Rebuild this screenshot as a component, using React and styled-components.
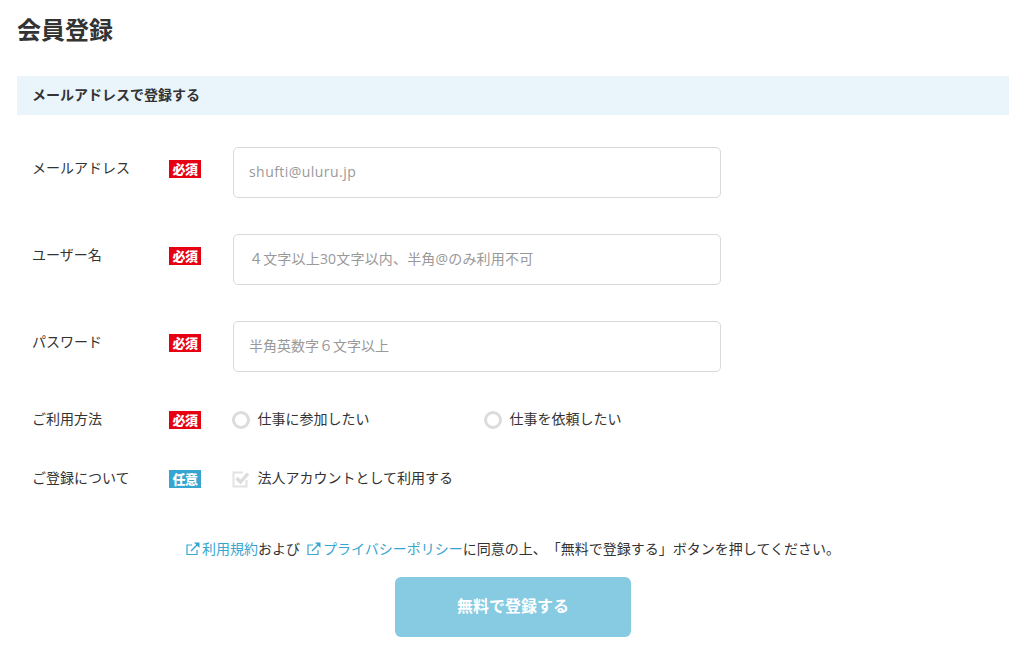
import React from "react";
import styled, { createGlobalStyle } from "styled-components";

const Global = createGlobalStyle`
  html, body {
    margin: 0;
    padding: 0;
    background: #fff;
    color: #333;
    font-family: "Noto Sans CJK JP", "Noto Sans", sans-serif;
    text-spacing-trim: space-all;
    font-feature-settings: "chws" 0, "palt" 0;
  }
  * { box-sizing: border-box; }
`;

const Page = styled.div`
  width: 992px;
  margin-left: 17px;
  padding-top: 12px;
`;

const Title = styled.h1`
  margin: 0;
  height: 64px;
  font-size: 24px;
  line-height: 34px;
  font-weight: 700;
  color: #333;
`;

const SectionBar = styled.div`
  height: 39px;
  padding-left: 15px;
  background: #e9f5fa;
  font-size: 14px;
  line-height: 37px;
  font-weight: 700;
`;

const Form = styled.div`
  padding-top: 32px;
`;

const Row = styled.div`
  display: flex;
  align-items: ${(p) => (p.$center ? "center" : "flex-start")};
  height: ${(p) => p.$height}px;
  margin-top: ${(p) => p.$top || 0}px;
  padding-left: 15px;
`;

const Label = styled.div`
  width: 137px;
  font-size: 14px;
  line-height: 20px;
  padding-top: ${(p) => (p.$center ? 0 : 10)}px;
  padding-bottom: ${(p) => (p.$center ? 4 : 0)}px;
`;

const Badge = styled.span`
  display: block;
  width: 32px;
  height: 18px;
  margin-right: 32px;
  margin-top: ${(p) => (p.$center ? 0 : 13)}px;
  background: ${(p) => (p.$optional ? "#36a6d0" : "#e60012")};
  color: #fff;
  font-size: 13px;
  line-height: 18px;
  font-weight: 900;
  text-align: center;
  white-space: nowrap;
  letter-spacing: -0.5px;
`;

const Input = styled.input`
  width: 488px;
  height: 51px;
  padding: 0 15px 2px;
  border: 1px solid #d9d9d9;
  border-radius: 5px;
  background: #fff;
  font-family: "Open Sans", "Noto Sans CJK JP", sans-serif;
  font-size: 14px;
  letter-spacing: ${(p) => p.$spacing || 0}px;
  outline: none;
  &::placeholder {
    color: #999;
    opacity: 1;
  }
`;

const Option = styled.label`
  display: flex;
  align-items: center;
  gap: 7.5px;
  width: ${(p) => p.$width || 252}px;
  margin-left: -1px;
  margin-right: 1px;
  font-size: 14px;
  line-height: 20px;
`;

const OptionText = styled.span`
  margin-top: -4px;
`;

const RadioMark = styled.span`
  width: 18px;
  height: 18px;
  border: 3px solid #dcdcdc;
  border-radius: 50%;
  background: #fff;
`;

const CheckIcon = () => (
  <svg width="18" height="18" viewBox="0 0 18 18" fill="none">
    <path d="M14.5 10V16.5H1.5V2.5H11" stroke="#e2e2e2" strokeWidth="2" />
    <path d="M4.5 8L8.5 12L16 3.5" stroke="#dcdcdc" strokeWidth="3.4" />
  </svg>
);

const Notice = styled.p`
  margin: 0;
  padding-top: 49px;
  height: 88px;
  font-size: 14px;
  line-height: 20px;
  text-align: center;
`;

const TermLink = styled.a`
  color: #36a6d0;
  text-decoration: none;
  margin-left: ${(p) => p.$gap || 0}px;
  svg {
    vertical-align: -2px;
    margin-right: 2px;
  }
`;

const ExternalIcon = () => (
  <svg width="14" height="14" viewBox="0 0 14 14" fill="none">
    <path d="M11 8V12.5H1V3H6" stroke="#36a6d0" strokeWidth="1.2" />
    <path d="M5 9L12 2" stroke="#36a6d0" strokeWidth="1.4" />
    <path d="M8 0.5H13.5V6Z" fill="#36a6d0" />
  </svg>
);

const Submit = styled.button`
  display: block;
  width: 236px;
  height: 60px;
  margin: 0 auto;
  padding: 0 0 4px;
  border: 0;
  border-radius: 6px;
  background: #86cbe2;
  color: #fff;
  font-family: inherit;
  font-size: 16px;
  font-weight: 700;
`;

export default function App() {
  return (
    <Page>
      <Global />
      <Title>会員登録</Title>
      <SectionBar>メールアドレスで登録する</SectionBar>
      <Form>
        <Row $height={87}>
          <Label>メールアドレス</Label>
          <Badge>必須</Badge>
          <Input $spacing={0.45} placeholder="shufti@uluru.jp" />
        </Row>
        <Row $height={87}>
          <Label>ユーザー名</Label>
          <Badge>必須</Badge>
          <Input $spacing={0.18} placeholder="４文字以上30文字以内、半角@のみ利用不可" />
        </Row>
        <Row $height={87}>
          <Label>パスワード</Label>
          <Badge>必須</Badge>
          <Input placeholder="半角英数字６文字以上" />
        </Row>
        <Row $center $height={20} $top={2}>
          <Label $center>ご利用方法</Label>
          <Badge $center>必須</Badge>
          <Option><RadioMark /><OptionText>仕事に参加したい</OptionText></Option>
          <Option><RadioMark /><OptionText>仕事を依頼したい</OptionText></Option>
        </Row>
        <Row $center $height={20} $top={39}>
          <Label $center>ご登録について</Label>
          <Badge $center $optional>任意</Badge>
          <Option $width={300}><CheckIcon /><OptionText>法人アカウントとして利用する</OptionText></Option>
        </Row>
      </Form>
      <Notice>
        <TermLink href="#"><ExternalIcon />利用規約</TermLink>および{" "}
        <TermLink href="#" $gap={4}><ExternalIcon />プライバシーポリシー</TermLink>
        に同意の上、「無料で登録する」ボタンを押してください。
      </Notice>
      <Submit>無料で登録する</Submit>
    </Page>
  );
}
